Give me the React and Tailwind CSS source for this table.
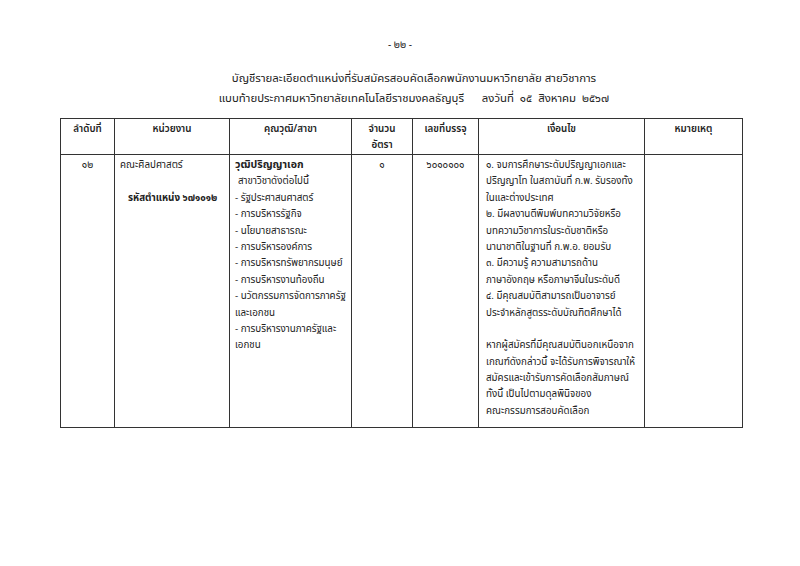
import React from 'react';

const subjects = [
  'รัฐประศาสนศาสตร์',
  'การบริหารรัฐกิจ',
  'นโยบายสาธารณะ',
  'การบริหารองค์การ',
  'การบริหารทรัพยากรมนุษย์',
  'การบริหารงานท้องถิ่น',
  'นวัตกรรมการจัดการภาครัฐ\nและเอกชน',
  'การบริหารงานภาครัฐและ\nเอกชน',
];

const conditions = [
  '๑. จบการศึกษาระดับปริญญาเอกและ',
  'ปริญญาโท ในสถาบันที่ ก.พ. รับรองทั้ง',
  'ในและต่างประเทศ',
  '๒. มีผลงานตีพิมพ์บทความวิจัยหรือ',
  'บทความวิชาการในระดับชาติหรือ',
  'นานาชาติในฐานที่ ก.พ.อ. ยอมรับ',
  '๓. มีความรู้ ความสามารถด้าน',
  'ภาษาอังกฤษ หรือภาษาจีนในระดับดี',
  '๔. มีคุณสมบัติสามารถเป็นอาจารย์',
  'ประจำหลักสูตรระดับบัณฑิตศึกษาได้',
  '',
  'หากผู้สมัครที่มีคุณสมบัตินอกเหนือจาก',
  'เกณฑ์ดังกล่าวนี้ จะได้รับการพิจารณาให้',
  'สมัครและเข้ารับการคัดเลือกสัมภาษณ์',
  'ทั้งนี้ เป็นไปตามดุลพินิจของ',
  'คณะกรรมการสอบคัดเลือก',
];

export default function App() {
  return (
    <div className="w-[800px] h-[566px] bg-white text-[#222] overflow-hidden" style={{ fontFamily: '"Noto Sans Thai", "Noto Sans", "DejaVu Sans", sans-serif' }}>
      <div className="pt-[38px] text-center text-[10px] leading-[14px]">- ๒๒ -</div>
      <div className="mt-[17px] pl-[28px] text-center text-[11.4px] leading-[20px]">
        <div>บัญชีรายละเอียดตำแหน่งที่รับสมัครสอบคัดเลือกพนักงานมหาวิทยาลัย สายวิชาการ</div>
        <div>แบบท้ายประกาศมหาวิทยาลัยเทคโนโลยีราชมงคลธัญบุรี&nbsp;&nbsp;&nbsp;&nbsp;&nbsp; ลงวันที่&nbsp; ๑๕&nbsp; สิงหาคม&nbsp; ๒๕๖๗</div>
      </div>
      <div className="pl-[60px] mt-[9px]">
        <table className="border-collapse w-[682px] text-[9.8px] leading-[16.4px] table-fixed">
          <colgroup>
            <col className="w-[54px]" />
            <col className="w-[115px]" />
            <col className="w-[122px]" />
            <col className="w-[61px]" />
            <col className="w-[66px]" />
            <col className="w-[166px]" />
            <col className="w-[98px]" />
          </colgroup>
          <thead>
            <tr className="h-[36px] align-top text-center">
              <th className="border border-[#333] pt-[2px] font-semibold">ลำดับที่</th>
              <th className="border border-[#333] pt-[2px] font-semibold">หน่วยงาน</th>
              <th className="border border-[#333] pt-[2px] font-semibold">คุณวุฒิ/สาขา</th>
              <th className="border border-[#333] pt-[2px] font-semibold">จำนวน<br />อัตรา</th>
              <th className="border border-[#333] pt-[2px] font-semibold">เลขที่บรรจุ</th>
              <th className="border border-[#333] pt-[2px] font-semibold">เงื่อนไข</th>
              <th className="border border-[#333] pt-[2px] font-semibold">หมายเหตุ</th>
            </tr>
          </thead>
          <tbody>
            <tr className="align-top h-[273px]">
              <td className="border border-[#333] text-center pt-[2px]">๑๒</td>
              <td className="border border-[#333] pl-[5px] pt-[2px]">
                <div>คณะศิลปศาสตร์</div>
                <div className="mt-[16.4px] pl-[8px] font-bold">รหัสตำแหน่ง ๖๗๑๐๑๒</div>
              </td>
              <td className="border border-[#333] pl-[5px] pt-[2px] whitespace-nowrap">
                <div className="font-bold text-[10.6px]">วุฒิปริญญาเอก</div>
                <div className="pl-[3px]">สาขาวิชาดังต่อไปนี้</div>
                {subjects.map((s, i) => {
                  const [a, b] = s.split('\n');
                  return (
                    <div key={i}>
                      <div>- {a}</div>
                      {b && <div>{b}</div>}
                    </div>
                  );
                })}
              </td>
              <td className="border border-[#333] text-center pt-[2px]">๑</td>
              <td className="border border-[#333] text-center pt-[2px]">๖๐๑๐๑๐๑</td>
              <td className="border border-[#333] pl-[7px] pt-[2px]">
                {conditions.map((c, i) => (
                  <div key={i} className="h-[16.4px] whitespace-nowrap">{c}</div>
                ))}
              </td>
              <td className="border border-[#333]"></td>
            </tr>
          </tbody>
        </table>
      </div>
    </div>
  );
}
